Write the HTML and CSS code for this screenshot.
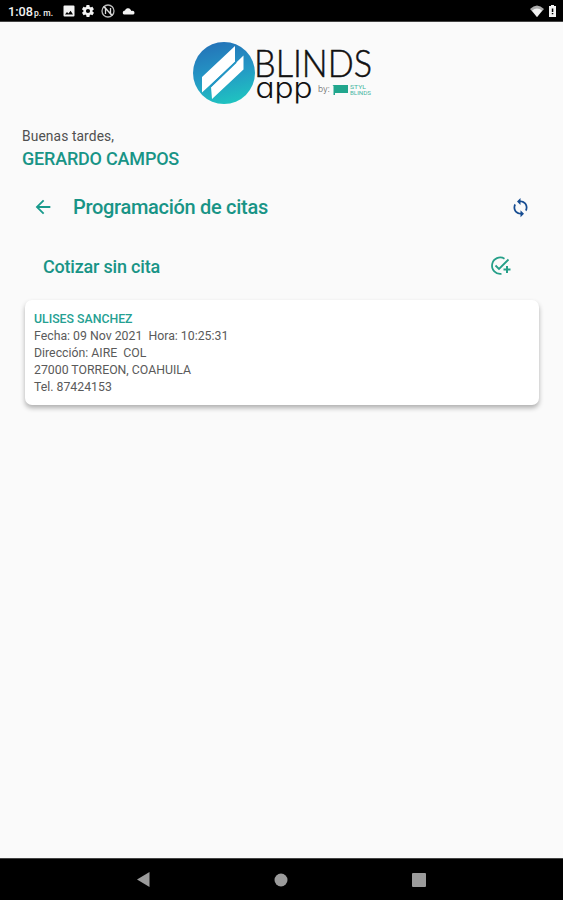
FILE: index.html
```html
<!DOCTYPE html>
<html lang="es">
<head>
<meta charset="utf-8">
<title>Blinds app</title>
<link rel="stylesheet" href="styles.css">
</head>
<body>
<header class="status">
  <svg class="clock" width="47" height="22" viewBox="0 0 47 22"><text class="time" x="0" y="16" textLength="25" lengthAdjust="spacingAndGlyphs">1:08</text><text class="ampm" x="26" y="16" textLength="19" lengthAdjust="spacingAndGlyphs">p. m.</text></svg>
  <svg class="s-photo" width="12" height="12" viewBox="0 0 12 12"><path fill-rule="evenodd" d="M1.5.5h9q1 0 1 1v9q0 1-1 1h-9q-1 0-1-1v-9q0-1 1-1zM2 9.5h8L7.6 5.8 5.4 8.4 4 7z"/></svg>
  <svg class="s-gear" width="12" height="12" viewBox="2 2 20 20"><path d="M19.400 13a7.800 7.800 0 0 0 0-2l2.100-1.600c.2-.2.3-.4.1-.7l-2-3.400c-.1-.2-.4-.3-.6-.2l-2.500 1c-.5-.4-1.100-.7-1.700-1l-.4-2.600c0-.3-.2-.5-.5-.5h-4c-.3 0-.5.2-.5.500l-.4 2.600c-.6.300-1.200.6-1.700 1l-2.500-1c-.2-.1-.5 0-.6.200l-2 3.400c-.1.200-.1.500.1.700L4.500 11a7.800 7.800 0 0 0 0 2l-2.100 1.600c-.2.200-.2.500-.1.700l2 3.400c.1.200.4.300.6.200l2.500-1c.5.400 1.100.7 1.700 1l.4 2.600c0 .3.2.5.5.5h4c.3 0 .5-.2.5-.5l.4-2.600c.6-.3 1.200-.6 1.700-1l2.500 1c.2.100.5 0 .6-.2l2-3.400c.1-.2.100-.5-.1-.7zM12 15.500a3.500 3.500 0 1 1 0-7 3.500 3.500 0 0 1 0 7z"/></svg>
  <svg class="s-off" width="14" height="14" viewBox="0 0 14 14"><circle cx="7" cy="7" r="6" fill="none" stroke="#bbb" stroke-width="1.300"/><path d="M4.500 10V4l5 6V4M2.500 2.500l9 9" fill="none" stroke="#ddd" stroke-width="1.300"/></svg>
  <svg class="s-cloud" width="13" height="9" viewBox="0 0 13 9"><path d="M2 8.500a2 2 0 0 1 0-3.700l1-.3A3 3 0 0 1 8.500 3.600L9.500 5A2 2 0 0 1 11.500 8.500z"/></svg>
  <span class="grow"></span>
  <svg class="s-wifi" width="14" height="12" viewBox="0 0 14 12"><path fill="#aaa" d="M0 4Q7-3 14 4L7 12z"/><path d="M2 5.500Q7 1.500 12 5.500L7 12z"/></svg>
  <svg class="s-batt" width="7" height="12" viewBox="0 0 7 12"><path d="M0 1h2V0h3v1h2v11H0z"/><path fill="#000" d="M2.800 3.500h1.500v3.500H2.800zM2.800 8h1.500v1.300H2.800z"/></svg>
</header>

<main class="screen">
  <svg class="logo" width="182" height="64" viewBox="0 0 182 64">
    <defs><linearGradient id="disc" x1=".35" y1="0" x2=".6" y2="1"><stop offset="0" stop-color="#2473b8"/><stop offset=".5" stop-color="#2497c5"/><stop offset="1" stop-color="#1fc4c0"/></linearGradient></defs>
    <circle cx="31" cy="32" r="31" fill="url(#disc)"/>
    <path fill="#fff" d="M9 36 42 5V21L9 51.500zM18 46 50.500 14.500V28.500L19 58z"/>
    <path stroke="#2496c4" stroke-width="1.800" d="M17.500 45.500 43 21"/>
    <text class="logo-name" x="61" y="36" textLength="118" lengthAdjust="spacingAndGlyphs">BLINDS</text>
    <text class="logo-app" x="62.500" y="56.500" textLength="57" lengthAdjust="spacingAndGlyphs">app</text>
    <text class="logo-by" x="125" y="51" textLength="12" lengthAdjust="spacingAndGlyphs">by:</text>
    <path fill="#21a68d" d="M139.500 44H155v8h-13v2h-1.500v-9z"/>
    <text class="logo-brand" x="157" y="48" textLength="16" lengthAdjust="spacingAndGlyphs">STYL</text>
    <text class="logo-brand" x="157" y="53.500" textLength="21" lengthAdjust="spacingAndGlyphs">BLINDS</text>
  </svg>

  <p class="greeting">Buenas tardes,</p>
  <h1 class="user">GERARDO CAMPOS</h1>

  <div class="bar">
    <svg width="22" height="22" viewBox="0 0 24 24"><path fill="#189a8c" d="M20 11H7.830l5.590-5.590L12 4l-8 8 8 8 1.410-1.410L7.830 13H20z"/></svg>
    <h2 class="bar-title">Programación de citas</h2>
    <svg width="21" height="21" viewBox="0 0 24 24"><path fill="#164c91" d="M12 4V1L8 5l4 4V6c3.310 0 6 2.690 6 6 0 1.010-.25 1.970-.7 2.800l1.460 1.460A7.930 7.930 0 0 0 20 12c0-4.420-3.580-8-8-8zm0 14c-3.310 0-6-2.690-6-6 0-1.010.25-1.970.7-2.800L5.240 7.740A7.930 7.930 0 0 0 4 12c0 4.420 3.580 8 8 8v3l4-4-4-4z"/></svg>
  </div>

  <div class="quote">
    <h3 class="quote-title">Cotizar sin cita</h3>
    <svg width="22" height="20" viewBox="0 0 22 20"><g fill="none" stroke="#259f88" stroke-width="1.800"><path d="M14.500 2.700A8.200 8.200 0 1 0 11.500 17.800"/><path d="M5.500 9.500 9 13l9.500-9.500"/><path stroke-width="2" d="M13.500 13.500h7M17 10v7"/></g></svg>
  </div>

  <article class="card">
    <h4 class="client">ULISES SANCHEZ</h4>
    <p>Fecha: 09 Nov 2021&nbsp; Hora: 10:25:31</p>
    <p>Dirección: AIRE&nbsp; COL</p>
    <p>27000 TORREON, COAHUILA</p>
    <p>Tel. 87424153</p>
  </article>
</main>

<nav class="nav">
  <svg width="13" height="15" viewBox="0 0 13 15"><path d="M0 7.500 12.500 0v15z"/></svg>
  <svg width="14" height="14" viewBox="0 0 14 14"><circle cx="7" cy="7" r="6.500"/></svg>
  <svg width="14" height="14" viewBox="0 0 14 14"><rect width="14" height="14" rx="1"/></svg>
</nav>
</body>
</html>
```
FILE: styles.css
```css
* { box-sizing: border-box; margin: 0; padding: 0; }
body {
  height: 900px;
  display: flex;
  flex-direction: column;
  background: #fafafa;
  font-family: Roboto, "Liberation Sans", sans-serif;
  overflow: hidden;
}
svg { display: block; flex: none; overflow: visible; }
.status {
  height: 22px;
  flex: none;
  display: flex;
  align-items: center;
  padding: 0 7px 0 8px;
  background: #000;
  border-bottom: 1px solid #444;
}
.status svg { fill: #f2f2f2; }
.time { font-size: 12.500px; font-weight: 500; }
.ampm { font-size: 9.500px; font-weight: 500; }
.s-photo { margin-left: 8px; }
.s-gear { margin-left: 7px; }
.s-off { margin-left: 7px; }
.s-cloud { margin-left: 7px; }
.grow { flex: 1; }
.s-batt { margin-left: 5px; }

.screen { flex: 1; padding: 19px 24px 0 22px; }
.logo { margin-left: 171px; }
.logo-name { font: 300 38px Lato, sans-serif; fill: #111; stroke: #111; stroke-width: .5px; }
.logo-app { font: 300 28.500px Inter, sans-serif; font-feature-settings: "cv11"; fill: #111; }
.logo-by { font: 300 9px Inter, sans-serif; fill: #666; }
.logo-brand { font: 400 6px Roboto, sans-serif; fill: #45b5a1; }

.greeting { margin-top: 21px; font-size: 13.800px; line-height: 20px; color: #505050; letter-spacing: .1px; }
.user { margin-top: 2px; font-size: 18px; line-height: 22px; font-weight: 500; color: #189486; letter-spacing: -.2px; }
.bar { height: 36px; margin-top: 19px; padding: 0 8px 0 10px; display: flex; align-items: center; }
.bar-title { flex: 1; margin-left: 19px; font-size: 20px; font-weight: 500; color: #189486; letter-spacing: -.3px; }
.quote { height: 30px; margin-top: 26px; padding: 0 27px 0 21px; display: flex; align-items: center; justify-content: space-between; }
.quote-title { font-size: 18px; font-weight: 500; color: #189486; letter-spacing: -.2px; }
.card {
  height: 105px;
  margin: 19px 0 0 3px;
  padding: 11px 9px;
  border-radius: 7px;
  background: #fff;
  box-shadow: 0 3px 5px rgba(0, 0, 0, .3);
  font-size: 12.300px;
  line-height: 17.100px;
  color: #5a5a5a;
}
.client { font-size: 12.300px; font-weight: 500; color: #25a092; }

.nav {
  height: 42px;
  flex: none;
  display: flex;
  justify-content: space-between;
  align-items: center;
  padding: 0 137px;
  background: #000;
  border-top: 1px solid #444;
}
.nav svg { fill: #9b9b9b; }
```
